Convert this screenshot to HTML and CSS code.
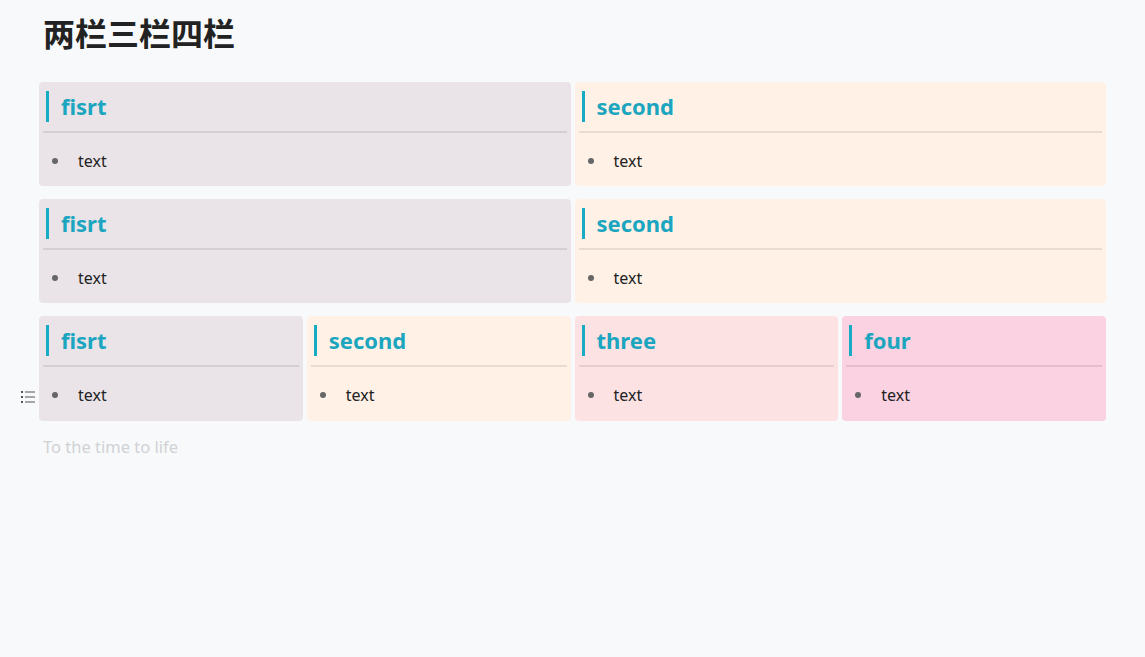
FILE: index.html
```html
<!DOCTYPE html>
<html lang="zh">
<head>
<meta charset="utf-8">
<title>两栏三栏四栏</title>
<link rel="stylesheet" href="styles.css">
</head>
<body>
<main class="page">
  <h1 class="title">两栏三栏四栏</h1>

  <section class="row cols-2">
    <div class="card c1">
      <div class="card-head"><h3>fisrt</h3></div>
      <ul class="card-list"><li>text</li></ul>
    </div>
    <div class="card c2">
      <div class="card-head"><h3>second</h3></div>
      <ul class="card-list"><li>text</li></ul>
    </div>
  </section>

  <section class="row cols-2">
    <div class="card c1">
      <div class="card-head"><h3>fisrt</h3></div>
      <ul class="card-list"><li>text</li></ul>
    </div>
    <div class="card c2">
      <div class="card-head"><h3>second</h3></div>
      <ul class="card-list"><li>text</li></ul>
    </div>
  </section>

  <section class="row cols-4">
    <span class="handle" aria-hidden="true">
      <svg width="14" height="14" viewBox="0 0 14 14">
        <rect x="0" y="1" width="2" height="2" fill="#555"/>
        <rect x="4" y="1.5" width="10" height="1" fill="#555"/>
        <rect x="0" y="6" width="2" height="2" fill="#555"/>
        <rect x="4" y="6.5" width="10" height="1" fill="#555"/>
        <rect x="0" y="11" width="2" height="2" fill="#555"/>
        <rect x="4" y="11.5" width="10" height="1" fill="#555"/>
      </svg>
    </span>
    <div class="card c1">
      <div class="card-head"><h3>fisrt</h3></div>
      <ul class="card-list"><li>text</li></ul>
    </div>
    <div class="card c2">
      <div class="card-head"><h3>second</h3></div>
      <ul class="card-list"><li>text</li></ul>
    </div>
    <div class="card c3">
      <div class="card-head"><h3>three</h3></div>
      <ul class="card-list"><li>text</li></ul>
    </div>
    <div class="card c4">
      <div class="card-head"><h3>four</h3></div>
      <ul class="card-list"><li>text</li></ul>
    </div>
  </section>

  <p class="placeholder">To the time to life</p>
</main>
</body>
</html>
```

FILE: styles.css
```css
* { box-sizing: border-box; }

html, body {
  margin: 0;
  padding: 0;
  background: #f8f9fb;
}

body {
  font-family: "Noto Sans", "Noto Sans CJK SC", sans-serif;
  color: #222;
}

.page {
  padding: 0 39px;
}

.title {
  margin: 0;
  padding: 8px 0 0 4px;
  font-size: 32px;
  line-height: 48px;
  font-weight: 700;
  color: #222;
  font-family: "Noto Sans CJK SC", "Noto Sans", sans-serif;
}

.row {
  position: relative;
  display: grid;
  gap: 4px;
  margin-top: 13px;
}

.title + .row { margin-top: 26px; }

.cols-2 { grid-template-columns: 1fr 1fr; }
.cols-4 { grid-template-columns: repeat(4, 1fr); }

.card {
  border-radius: 4px;
  padding: 4px;
  min-height: 104px;
}

.cols-4 .card { min-height: 105px; }

.c1 { background: #eae4e9; }
.c2 { background: #fff1e6; }
.c3 { background: #fde2e4; }
.c4 { background: #fad2e1; }

.card-head {
  padding: 5px 0 9px 3px;
  border-bottom: 2px solid rgba(0, 0, 0, 0.09);
}

.card-head h3 {
  margin: 0;
  border-left: 3px solid #17acc4;
  padding-left: 12px;
  font-size: 22px;
  line-height: 31px;
  font-weight: 700;
  color: #1ba5bf;
}

.card-list {
  list-style: none;
  margin: 16px 0 9px;
  padding-left: 9px;
  font-size: 16px;
  line-height: 24px;
  color: #222;
}

.card-list li {
  display: flex;
  align-items: center;
}

.card-list li::before {
  content: "";
  width: 6px;
  height: 6px;
  border-radius: 50%;
  background: #666;
  margin-right: 20px;
  flex: none;
}

.handle {
  position: absolute;
  left: -18px;
  top: 74px;
  width: 14px;
  height: 14px;
  display: block;
}

.handle svg { display: block; }

.placeholder {
  margin: 14px 0 0 4px;
  font-size: 16.5px;
  line-height: 24px;
  color: #d0d2d5;
}
```
